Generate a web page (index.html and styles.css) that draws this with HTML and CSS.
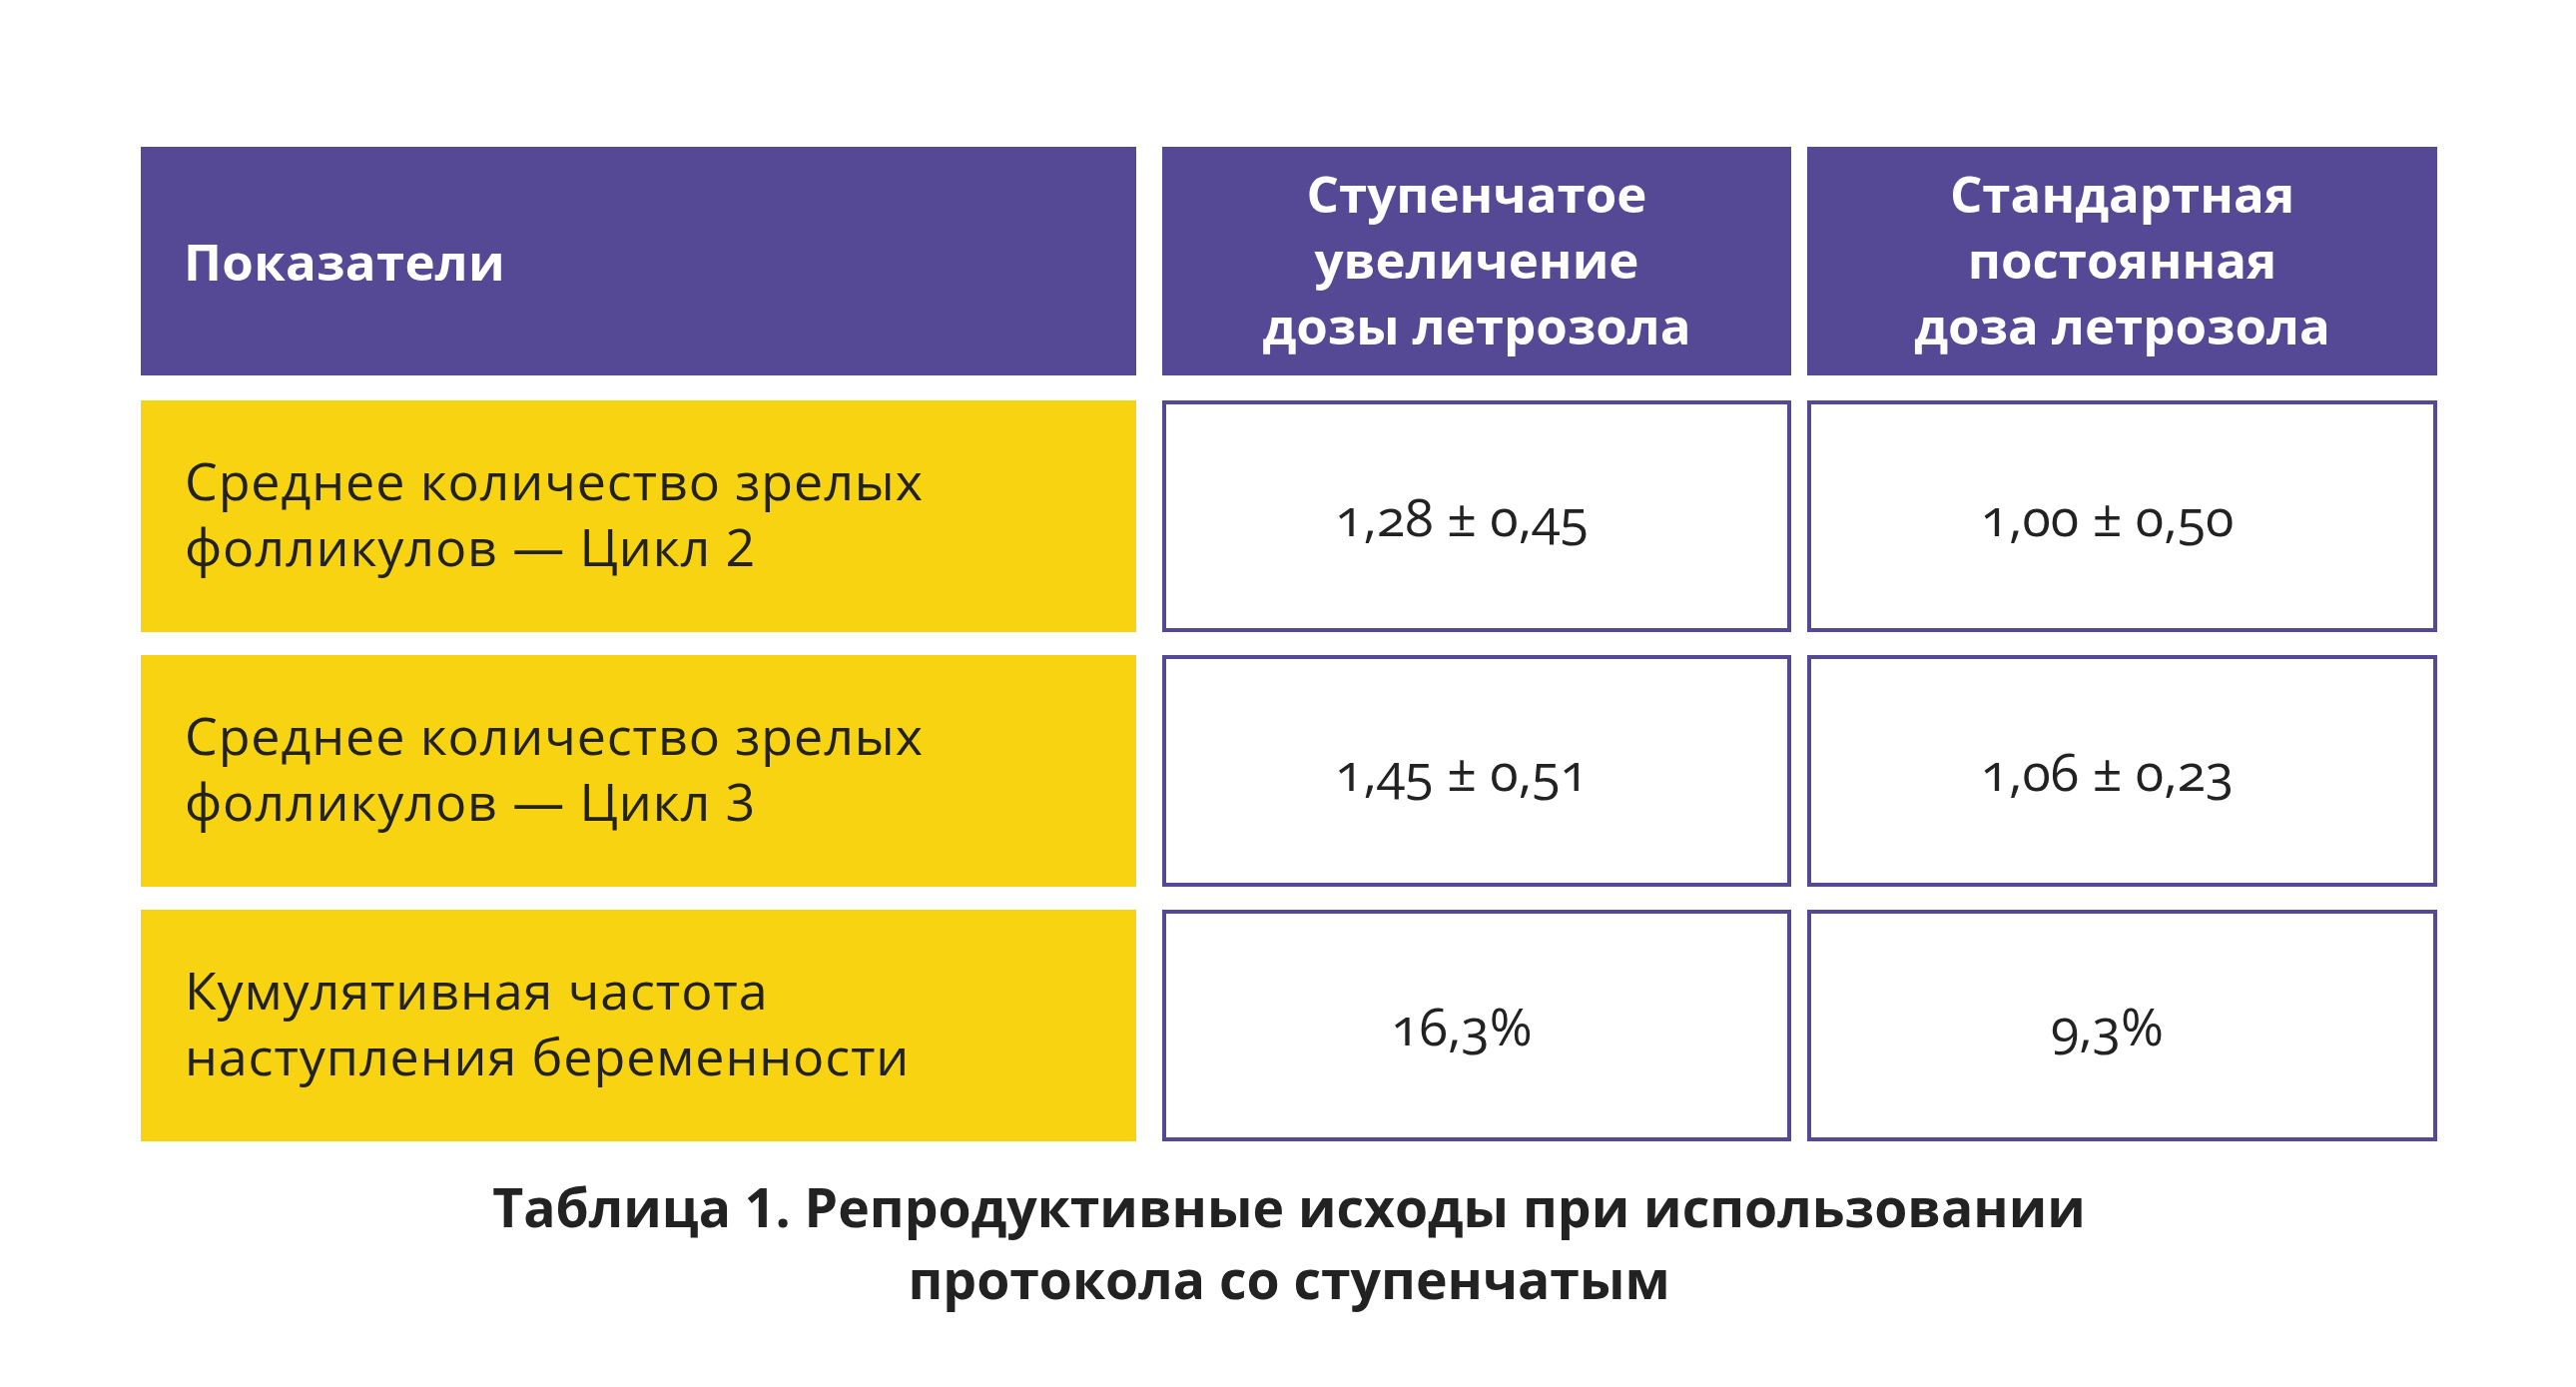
FILE: index.html
```html
<!DOCTYPE html>
<html lang="ru">
<head>
<meta charset="utf-8">
<title>Таблица 1</title>
<link rel="stylesheet" href="styles.css">
</head>
<body>
<main class="page">
  <div class="table">
    <div class="cell head head-label">Показатели</div>
    <div class="cell head head-col">Ступенчатое<br>увеличение<br>дозы летрозола</div>
    <div class="cell head head-col">Стандартная<br>постоянная<br>доза летрозола</div>

    <div class="cell label">Среднее количество зрелых<br>фолликулов — Цикл 2</div>
    <div class="cell value">1,28 ± 0,45</div>
    <div class="cell value">1,00 ± 0,50</div>

    <div class="cell label">Среднее количество зрелых<br>фолликулов — Цикл 3</div>
    <div class="cell value">1,45 ± 0,51</div>
    <div class="cell value">1,06 ± 0,23</div>

    <div class="cell label">Кумулятивная частота<br>наступления беременности</div>
    <div class="cell value">16,3%</div>
    <div class="cell value">9,3%</div>
  </div>
  <p class="caption">Таблица 1. Репродуктивные исходы при использовании<br>протокола со ступенчатым</p>
</main>
</body>
</html>
```

FILE: styles.css
```css
html, body {
  margin: 0;
  padding: 0;
  background: #ffffff;
}

body {
  font-family: "Open Sans", "Noto Sans", sans-serif;
  color: #222222;
}

.page {
  padding: 147px 0 0 141px;
  width: 2300px;
}

.table {
  display: grid;
  grid-template-columns: 1007px 630px 631px;
  grid-template-rows: 231px 232px 232px 232px;
  column-gap: 16px;
  row-gap: 23px;
}

.cell {
  box-sizing: border-box;
  display: flex;
  align-items: center;
}

.head {
  background: #554995;
  color: #ffffff;
  font-weight: 700;
  font-size: 51px;
  line-height: 66px;
  margin-bottom: 2px;
  padding-bottom: 6px;
}

.head-label {
  margin-right: 10px;
  padding-left: 43px;
  padding-bottom: 2px;
  letter-spacing: 0.3px;
}

.head-col {
  justify-content: center;
  text-align: center;
}

.label {
  background: #f7d312;
  margin-right: 10px;
  padding-left: 44px;
  padding-bottom: 6px;
  font-size: 52px;
  line-height: 66px;
  letter-spacing: 0.9px;
  color: #222222;
}

.value {
  border: 4px solid #554995;
  background: #ffffff;
  justify-content: center;
  padding-right: 30px;
  padding-bottom: 2px;
  font-size: 52px;
  color: #222222;
  font-variant-numeric: oldstyle-nums;
}

.caption {
  margin: 30px 0 0 0;
  width: 2300px;
  text-align: center;
  font-weight: 700;
  font-size: 53.5px;
  line-height: 72px;
  color: #222222;
}
```
